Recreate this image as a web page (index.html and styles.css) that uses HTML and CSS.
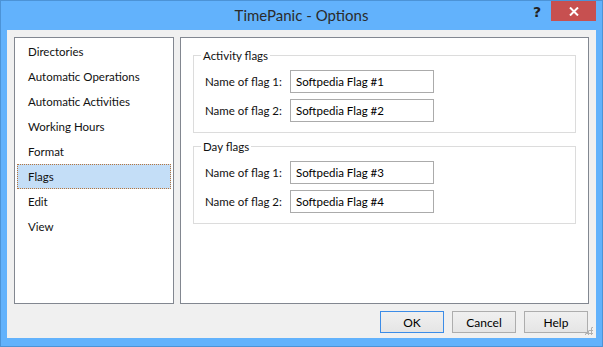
FILE: index.html
```html
<!DOCTYPE html>
<html>
<head>
    <title>TimePanic - Options</title>
    <link rel="stylesheet" href="styles.css">
</head>
<body>
    <div class="window">
        <div class="titlebar">
            <div class="title">TimePanic - Options</div>
            <div class="help-btn">?</div>
            <div class="close-btn">
                <svg width="10" height="9" viewBox="0 0 10 9">
                    <path d="M1 0.5 L9 8.5 M9 0.5 L1 8.5" stroke="#fff" stroke-width="2"/>
                </svg>
            </div>
        </div>
        <div class="client">
            <div class="main">
                <ul class="pages">
                    <li>Directories</li>
                    <li>Automatic Operations</li>
                    <li>Automatic Activities</li>
                    <li>Working Hours</li>
                    <li>Format</li>
                    <li class="selected">Flags</li>
                    <li>Edit</li>
                    <li>View</li>
                </ul>
                <div class="panel">
                    <fieldset class="group">
                        <legend>Activity flags</legend>
                        <div class="row">
                            <label>Name of flag 1:</label>
                            <input type="text" value="Softpedia Flag #1">
                        </div>
                        <div class="row">
                            <label>Name of flag 2:</label>
                            <input type="text" value="Softpedia Flag #2">
                        </div>
                    </fieldset>
                    <fieldset class="group">
                        <legend>Day flags</legend>
                        <div class="row">
                            <label>Name of flag 1:</label>
                            <input type="text" value="Softpedia Flag #3">
                        </div>
                        <div class="row">
                            <label>Name of flag 2:</label>
                            <input type="text" value="Softpedia Flag #4">
                        </div>
                    </fieldset>
                </div>
            </div>
            <div class="buttons">
                <button class="default">OK</button>
                <button>Cancel</button>
                <button>Help</button>
            </div>
            <div class="grip"></div>
        </div>
    </div>
</body>
</html>
```

FILE: styles.css
```css
body {
    margin: 0;
    font-family: Lato, "Noto Sans", sans-serif;
    font-size: 11.5px;
    color: #000;
}

.window {
    width: 603px;
    height: 347px;
    box-sizing: border-box;
    background: #62b2fc;
    border: 1px solid #4c93d6;
    display: flex;
    flex-direction: column;
}

.titlebar {
    height: 29px;
    display: flex;
    align-items: flex-start;
    position: relative;
}

.title {
    flex: 1;
    text-align: center;
    font-size: 15px;
    color: #2b2b2b;
    line-height: 29px;
}

.help-btn {
    position: absolute;
    right: 61px;
    top: 3px;
    font-family: "DejaVu Sans", sans-serif;
    font-weight: bold;
    font-size: 14px;
    color: #222;
}

.close-btn {
    position: absolute;
    right: 6px;
    top: 0;
    width: 45px;
    height: 20px;
    background: #c75050;
    display: flex;
    align-items: center;
    justify-content: center;
}

.client {
    margin: 0 6px 8px 6px;
    flex: 1;
    background: #f0f0f0;
    padding: 7px 7px 0 7px;
    display: flex;
    flex-direction: column;
    position: relative;
}

.main {
    display: flex;
    gap: 6px;
    height: 267px;
}

.pages {
    list-style: none;
    margin: 0;
    padding: 1px;
    width: 156px;
    background: #fff;
    border: 1px solid #828790;
}

.pages li {
    height: 25px;
    line-height: 25px;
    padding-left: 11px;
    margin: 0 1px;
    box-sizing: border-box;
    color: #111;
    white-space: nowrap;
}

.pages li.selected {
    background: #c4def7;
    border: 1px dotted #b7753c;
    line-height: 23px;
    padding-left: 10px;
}

.panel {
    flex: 1;
    background: #fff;
    border: 1px solid #828790;
    padding: 11px 12px 0 12px;
    display: flex;
    flex-direction: column;
    gap: 7px;
}

.group {
    margin: 0;
    border: 1px solid #dcdcdc;
    padding: 8px 0 10px 11px;
    display: flex;
    flex-direction: column;
    gap: 6px;
}

.group legend {
    padding: 0 2px;
    margin-left: -4px;
    color: #111;
}

.row {
    display: flex;
    align-items: center;
}

.row label {
    width: 85px;
    color: #111;
    white-space: nowrap;
}

.row input {
    width: 144px;
    height: 23px;
    box-sizing: border-box;
    border: 1px solid #ababab;
    padding: 0 5px;
    font-family: inherit;
    font-size: 11.5px;
    color: #000;
    outline: none;
}

.buttons {
    display: flex;
    justify-content: flex-end;
    gap: 8px;
    padding: 7px 1px 0 0;
}

.buttons button {
    width: 64px;
    height: 22px;
    border: 1px solid #adadad;
    background: linear-gradient(#f0f0f0, #e5e5e5);
    font-family: inherit;
    font-size: 12px;
    color: #000;
    padding: 0;
}

.buttons button.default {
    border-color: #3c8ce7;
}

.grip {
    position: absolute;
    right: 3px;
    bottom: 3px;
    width: 9px;
    height: 9px;
    background:
        radial-gradient(circle, #b0b0b0 1px, transparent 1.2px) 0 0 / 3px 3px;
    clip-path: polygon(100% 0, 100% 100%, 0 100%);
}
```
